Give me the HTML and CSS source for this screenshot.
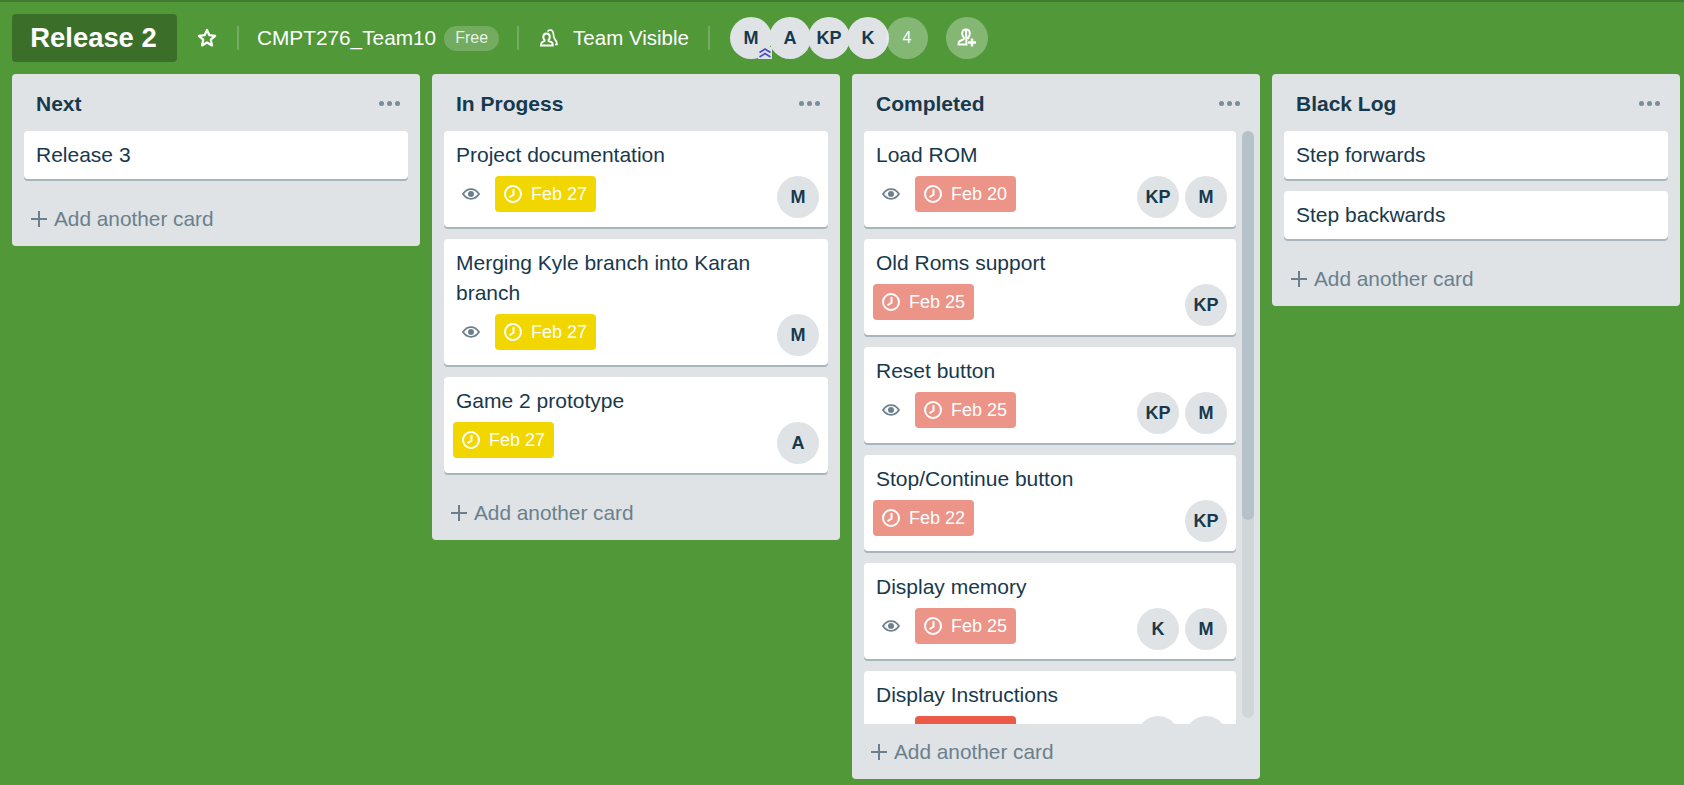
FILE: index.html
```html
<!DOCTYPE html>
<html lang="en">
<head>
    <meta charset="UTF-8">
    <meta name="viewport" content="width=device-width, initial-scale=1.0">
    <title>Release 2</title>
    <link rel="stylesheet" href="styles.css">
</head>
<body>
    <svg class="sprites" width="0" height="0">
        <symbol id="clock" viewBox="0 0 18 18">
            <circle cx="9" cy="9" r="8" fill="none" stroke="currentColor" stroke-width="2"/>
            <path d="M9.500 4V9.800L5.500 12.200" fill="none" stroke="currentColor" stroke-width="2"/>
        </symbol>
        <symbol id="eye" viewBox="0 0 18 12">
            <path d="M1 6C3.200 2.800 6 1.200 9 1.200S14.800 2.800 17 6C14.800 9.200 12 10.800 9 10.800S3.200 9.200 1 6Z" fill="none" stroke="currentColor" stroke-width="1.800"/>
            <circle cx="9" cy="6" r="3" fill="currentColor"/>
        </symbol>
    </svg>

    <header class="board-header">
        <h1 class="board-title">Release 2</h1>
        <svg class="star" width="20" height="20" viewBox="0 0 18 18">
            <path d="M9 1.800L11.100 6.500L16.300 7.100L12.400 10.500L13.500 15.700L9 13L4.500 15.700L5.600 10.500L1.700 7.100L6.900 6.500Z" fill="none" stroke="#fff" stroke-width="2" stroke-linejoin="round"/>
        </svg>
        <span class="sep sep-star"></span>
        <span class="team-name">CMPT276_Team10</span>
        <span class="plan">Free</span>
        <span class="sep sep-plan"></span>
        <svg class="team-icon" width="18" height="18" viewBox="0 0 18 18">
            <path d="M6.500 4.500C8.500 4.500 9.800 6 9.800 8C9.800 9.300 9.300 10.300 8.600 11V12L11.500 13.200C12.500 13.700 12.800 14.500 12.800 16.500H1C1 14.500 1.300 13.700 2.300 13.200L4.500 12V11C3.800 10.300 3.300 9.300 3.300 8C3.300 6 4.700 4.500 6.500 4.500Z" fill="none" stroke="#fff" stroke-width="2"/>
            <path d="M7.500 2.500C8.300 1.500 9.200 1 10 1C12.300 1 13.300 2.800 13.400 5C13.500 7.500 14 9 15 10.500C16.200 11.600 17 13 17 15.500H15" fill="none" stroke="#fff" stroke-width="1.700"/>
        </svg>
        <span class="visibility">Team Visible</span>
        <span class="sep sep-team"></span>
        <div class="members">
            <span class="avatar member-admin">M
                <svg class="admin-mark" width="14" height="12" viewBox="0 0 14 12">
                    <path d="M1.500 5.500L7 2L12.500 5.500M1.500 10L7 6.500L12.500 10" fill="none" stroke="#4a4fc4" stroke-width="1.700"/>
                </svg>
            </span>
            <span class="avatar">A</span>
            <span class="avatar">KP</span>
            <span class="avatar">K</span>
            <span class="avatar avatar-more">4</span>
        </div>
        <span class="avatar avatar-add">
            <svg width="20" height="20" viewBox="0 0 20 20">
                <path d="M9 1.500C11.300 1.500 12.800 3.300 12.800 5.800C12.800 7.600 12 8.900 11.200 9.600V11.200M9.500 16.500H1.600V15C1.600 14 2 13.500 3 13L6.800 11.200V9.600C6 8.900 5.200 7.600 5.200 5.800C5.200 3.300 6.700 1.500 9 1.500Z" fill="none" stroke="#fff" stroke-width="2"/>
                <path d="M15 10.500V18.500M11 14.500H19" fill="none" stroke="#fff" stroke-width="2.400"/>
            </svg>
        </span>
    </header>

    <main class="board">
        <section class="list">
            <div class="list-header">
                <h2>Next</h2>
                <span class="dots"><i></i><i></i><i></i></span>
            </div>
            <div class="list-cards">
                <article class="card"><p class="card-title">Release 3</p></article>
            </div>
            <div class="add-card"><span class="plus"></span>Add another card</div>
        </section>

        <section class="list">
            <div class="list-header">
                <h2>In Progess</h2>
                <span class="dots"><i></i><i></i><i></i></span>
            </div>
            <div class="list-cards">
                <article class="card">
                    <p class="card-title">Project documentation</p>
                    <div class="card-meta">
                        <div class="badges">
                            <svg class="eye"><use href="#eye"/></svg>
                            <span class="due due-soon"><svg class="clock"><use href="#clock"/></svg>Feb 27</span>
                        </div>
                        <div class="card-members"><span class="avatar">M</span></div>
                    </div>
                </article>
                <article class="card">
                    <p class="card-title">Merging Kyle branch into Karan branch</p>
                    <div class="card-meta">
                        <div class="badges">
                            <svg class="eye"><use href="#eye"/></svg>
                            <span class="due due-soon"><svg class="clock"><use href="#clock"/></svg>Feb 27</span>
                        </div>
                        <div class="card-members"><span class="avatar">M</span></div>
                    </div>
                </article>
                <article class="card">
                    <p class="card-title">Game 2 prototype</p>
                    <div class="card-meta">
                        <div class="badges">
                            <span class="due due-soon"><svg class="clock"><use href="#clock"/></svg>Feb 27</span>
                        </div>
                        <div class="card-members"><span class="avatar">A</span></div>
                    </div>
                </article>
            </div>
            <div class="add-card"><span class="plus"></span>Add another card</div>
        </section>

        <section class="list">
            <div class="list-header">
                <h2>Completed</h2>
                <span class="dots"><i></i><i></i><i></i></span>
            </div>
            <div class="list-scroll">
                <div class="scroll-cards">
                    <article class="card">
                        <p class="card-title">Load ROM</p>
                        <div class="card-meta">
                            <div class="badges">
                                <svg class="eye"><use href="#eye"/></svg>
                                <span class="due due-past"><svg class="clock"><use href="#clock"/></svg>Feb 20</span>
                            </div>
                            <div class="card-members"><span class="avatar">KP</span><span class="avatar">M</span></div>
                        </div>
                    </article>
                    <article class="card">
                        <p class="card-title">Old Roms support</p>
                        <div class="card-meta">
                            <div class="badges">
                                <span class="due due-past"><svg class="clock"><use href="#clock"/></svg>Feb 25</span>
                            </div>
                            <div class="card-members"><span class="avatar">KP</span></div>
                        </div>
                    </article>
                    <article class="card">
                        <p class="card-title">Reset button</p>
                        <div class="card-meta">
                            <div class="badges">
                                <svg class="eye"><use href="#eye"/></svg>
                                <span class="due due-past"><svg class="clock"><use href="#clock"/></svg>Feb 25</span>
                            </div>
                            <div class="card-members"><span class="avatar">KP</span><span class="avatar">M</span></div>
                        </div>
                    </article>
                    <article class="card">
                        <p class="card-title">Stop/Continue button</p>
                        <div class="card-meta">
                            <div class="badges">
                                <span class="due due-past"><svg class="clock"><use href="#clock"/></svg>Feb 22</span>
                            </div>
                            <div class="card-members"><span class="avatar">KP</span></div>
                        </div>
                    </article>
                    <article class="card">
                        <p class="card-title">Display memory</p>
                        <div class="card-meta">
                            <div class="badges">
                                <svg class="eye"><use href="#eye"/></svg>
                                <span class="due due-past"><svg class="clock"><use href="#clock"/></svg>Feb 25</span>
                            </div>
                            <div class="card-members"><span class="avatar">K</span><span class="avatar">M</span></div>
                        </div>
                    </article>
                    <article class="card">
                        <p class="card-title">Display Instructions</p>
                        <div class="card-meta">
                            <div class="badges">
                                <svg class="eye"><use href="#eye"/></svg>
                                <span class="due due-late"></span>
                            </div>
                            <div class="card-members"><span class="avatar"></span><span class="avatar"></span></div>
                        </div>
                    </article>
                </div>
                <div class="scrollbar"><div class="scrollbar-thumb"></div></div>
            </div>
            <div class="add-card"><span class="plus"></span>Add another card</div>
        </section>

        <section class="list">
            <div class="list-header">
                <h2>Black Log</h2>
                <span class="dots"><i></i><i></i><i></i></span>
            </div>
            <div class="list-cards">
                <article class="card"><p class="card-title">Step forwards</p></article>
                <article class="card"><p class="card-title">Step backwards</p></article>
            </div>
            <div class="add-card"><span class="plus"></span>Add another card</div>
        </section>
    </main>
</body>
</html>
```

FILE: styles.css
```css
* { box-sizing: border-box; }

html, body { height: 100%; }
body { margin: 0; display: flex; flex-direction: column; overflow: hidden; background: #519839; color: #17394d; font-family: "Liberation Sans", Arial, sans-serif; border-top: 2px solid #417a2e; }

.sprites { position: absolute; }

/* header */
.board-header { height: 72px; flex: none; display: flex; align-items: center; padding: 0 12px; color: #fff; }
.board-title { width: 165px; height: 48px; margin: 0; padding-right: 2px; display: flex; align-items: center; justify-content: center; background: #3b6f29; border-radius: 4px; font-size: 27.400px; font-weight: bold; }
.star { margin-left: 20px; }
.sep { width: 2px; height: 24px; background: rgba(255, 255, 255, 0.2); }
.sep-star { margin-left: 20px; }
.team-name { margin-left: 18px; font-size: 20.800px; }
.plan { height: 25px; margin-left: 8px; padding: 0 11px; display: flex; align-items: center; background: rgba(255, 255, 255, 0.2); border-radius: 13px; color: rgba(255, 255, 255, 0.85); font-size: 16px; }
.sep-plan { margin-left: 18px; }
.team-icon { margin-left: 21px; }
.visibility { margin-left: 15px; font-size: 20.500px; }
.sep-team { margin-left: 19px; }

.members { margin-left: 20px; display: flex; }
.members .avatar { margin-right: -3px; }

.avatar { width: 42px; height: 42px; flex: none; display: flex; align-items: center; justify-content: center; position: relative; background: #dfe3e6; color: #17394d; border-radius: 50%; font-size: 18px; font-weight: bold; }
.avatar-more { background: rgba(255, 255, 255, 0.3); color: #fff; font-size: 16px; font-weight: normal; }
.avatar-add { margin-left: 21px; background: rgba(255, 255, 255, 0.3); }
.member-admin { z-index: 1; }
.admin-mark { position: absolute; right: 0; bottom: 0; background: #dfe3e6; }

/* board */
.board { flex: 1; min-height: 0; display: flex; align-items: flex-start; gap: 12px; padding: 0 12px 6px; }
.list { width: 408px; max-height: 100%; flex: none; display: flex; flex-direction: column; background: #dfe3e6; border-radius: 4px; }
.list-header { height: 57px; flex: none; display: flex; align-items: center; justify-content: space-between; padding: 2px 20px 0 24px; }
.list-header h2 { margin: 0; font-size: 21px; font-weight: bold; }
.dots { display: flex; gap: 3px; }
.dots i { width: 5px; height: 5px; background: #798d99; border-radius: 50%; }

.list-cards { min-height: 0; padding: 0 12px; }

/* the Completed list runs past the bottom of the window */
.list-scroll { flex: 1; min-height: 0; display: flex; gap: 6px; padding: 0 6px 0 12px; }
.scroll-cards { flex: 1; min-width: 0; overflow: hidden; }
.scrollbar { width: 12px; flex: none; margin-bottom: 6px; background: #d1d6d9; border-radius: 6px; }
.scrollbar-thumb { height: 389px; background: #b6c2c9; border-radius: 6px; }

.card { margin-bottom: 12px; padding: 9px 9px 3px; background: #fff; border-radius: 4px; box-shadow: 0 2px 0 rgba(9, 45, 66, 0.25); }
.card-title { margin: 0 0 6px; padding-left: 3px; font-size: 21px; line-height: 30px; }
.card-meta { display: flex; justify-content: space-between; margin-bottom: 6px; }
.badges { display: flex; align-items: flex-start; }
.eye { width: 18px; height: 12px; margin: 12px 15px 0 9px; color: #6b808c; flex: none; }
.due { width: 101px; height: 36px; display: flex; align-items: center; gap: 9px; padding: 0 9px; color: #fff; border-radius: 4px; font-size: 18px; white-space: nowrap; }
.clock { width: 18px; height: 18px; flex: none; }
.due-soon { background: #f2d600; }
.due-past { background: #ec9488; }
.due-late { background: #eb5a46; }
.card-members { display: flex; gap: 6px; }

.add-card { height: 55px; flex: none; display: flex; align-items: center; gap: 7px; padding-left: 19px; color: #6b808c; font-size: 20.800px; }
.plus { width: 16px; height: 16px; background: linear-gradient(#6b808c, #6b808c) center / 100% 2px no-repeat, linear-gradient(#6b808c, #6b808c) center / 2px 100% no-repeat; }
```
